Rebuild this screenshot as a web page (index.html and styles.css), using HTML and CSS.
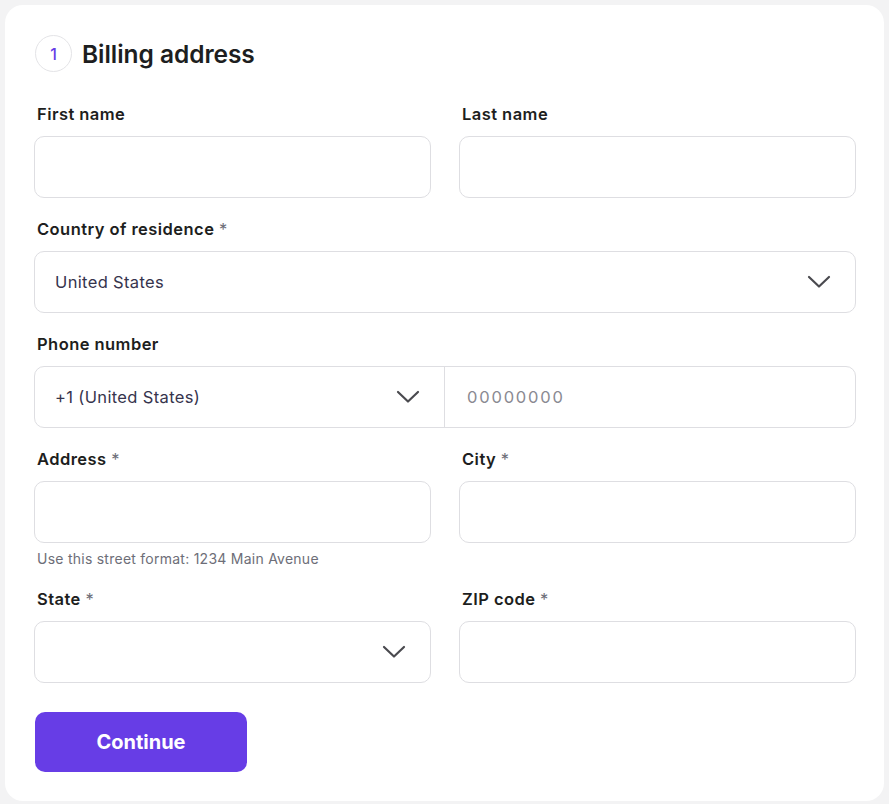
FILE: index.html
```html
<!DOCTYPE html>
<html lang="en">
<head>
<meta charset="utf-8">
<title>Billing address</title>
<link rel="stylesheet" href="styles.css">
</head>
<body>
<div class="page">
  <section class="card">
    <header class="header">
      <span class="step">1</span>
      <h1 class="title">Billing address</h1>
    </header>
    <div class="grid">
      <div class="field">
        <label class="label">First name</label>
        <div class="input"></div>
      </div>
      <div class="field">
        <label class="label">Last name</label>
        <div class="input"></div>
      </div>
      <div class="field full">
        <label class="label">Country of residence <span class="req">*</span></label>
        <div class="input select"><span class="value">United States</span>
          <svg class="chev" width="24" height="14" viewBox="0 0 24 14"><path d="M2 2 L12 11.5 L22 2" fill="none" stroke="#4a4a4f" stroke-width="2.2" stroke-linecap="round" stroke-linejoin="round"/></svg>
        </div>
      </div>
      <div class="field full">
        <label class="label">Phone number</label>
        <div class="input phone">
          <div class="code"><span class="value">+1 (United States)</span>
            <svg class="chev" width="24" height="14" viewBox="0 0 24 14"><path d="M2 2 L12 11.5 L22 2" fill="none" stroke="#4a4a4f" stroke-width="2.2" stroke-linecap="round" stroke-linejoin="round"/></svg>
          </div>
          <div class="num"><span class="placeholder">00000000</span></div>
        </div>
      </div>
      <div class="field">
        <label class="label">Address <span class="req">*</span></label>
        <div class="input"></div>
        <p class="help">Use this street format: 1234 Main Avenue</p>
      </div>
      <div class="field">
        <label class="label">City <span class="req">*</span></label>
        <div class="input"></div>
      </div>
      <div class="field">
        <label class="label">State <span class="req">*</span></label>
        <div class="input select">
          <span class="value"></span>
          <svg class="chev" width="24" height="14" viewBox="0 0 24 14"><path d="M2 2 L12 11.5 L22 2" fill="none" stroke="#4a4a4f" stroke-width="2.2" stroke-linecap="round" stroke-linejoin="round"/></svg>
        </div>
      </div>
      <div class="field">
        <label class="label">ZIP code <span class="req">*</span></label>
        <div class="input"></div>
      </div>
    </div>
    <button class="btn">Continue</button>
  </section>
</div>
</body>
</html>
```
FILE: styles.css
```css
* { box-sizing: border-box; }
html, body { margin: 0; padding: 0; }
body {
  background: #f3f3f4;
  font-family: Inter, "Noto Sans", "Liberation Sans", sans-serif;
  color: #1d1e20;
}
.page { padding: 5px 5px 3px 5px; }
.card {
  background: #fff;
  border-radius: 18px;
  padding: 30px 28px 29px 29px;
  min-height: 796px;
}
.header {
  display: flex;
  align-items: center;
  gap: 10px;
  margin-left: 1px;
}
.step {
  width: 37px;
  height: 37px;
  border-radius: 50%;
  border: 1px solid #e4e4e7;
  display: flex;
  align-items: center;
  justify-content: center;
  color: #673de6;
  font-size: 16px;
  font-weight: 500;
}
.title {
  margin: 0;
  font-size: 24.5px;
  font-weight: 600;
  letter-spacing: -0.05px;
  line-height: 36px;
}
.grid {
  margin-top: 30px;
  display: grid;
  grid-template-columns: 1fr 1fr;
  column-gap: 28px;
  row-gap: 19px;
}
.full { grid-column: 1 / 3; }
.field { display: flex; flex-direction: column; }
.label {
  font-size: 16.5px;
  font-weight: 600;
  letter-spacing: 0.45px;
  line-height: 24px;
  margin-bottom: 10px;
  padding-left: 3px;
}
.req { color: #6d6e78; font-weight: 400; }
.input {
  height: 62px;
  border: 1px solid #dedee2;
  border-radius: 10px;
  background: #fff;
}
.select {
  display: flex;
  align-items: center;
  justify-content: space-between;
  padding: 0 24px 0 20px;
}
.value { font-size: 16.5px; letter-spacing: 0.35px; color: #36344d; }
.phone { display: flex; }
.code {
  width: 410px;
  border-right: 1px solid #dedee2;
  display: flex;
  align-items: center;
  justify-content: space-between;
  padding: 0 24px 0 20px;
}
.num {
  flex: 1;
  display: flex;
  align-items: center;
  padding-left: 22px;
}
.placeholder { font-size: 16.5px; letter-spacing: 1.8px; color: #8a8a92; }
.help {
  margin: 7px 0 0 3px;
  font-size: 14px;
  letter-spacing: 0.25px;
  line-height: 18px;
  color: #6d6e78;
}
.btn {
  margin-top: 29px;
  margin-left: 1px;
  width: 212px;
  height: 60px;
  border: none;
  border-radius: 10px;
  background: #673de6;
  color: #fff;
  font-family: inherit;
  font-size: 20px;
  font-weight: 700;
}
```
